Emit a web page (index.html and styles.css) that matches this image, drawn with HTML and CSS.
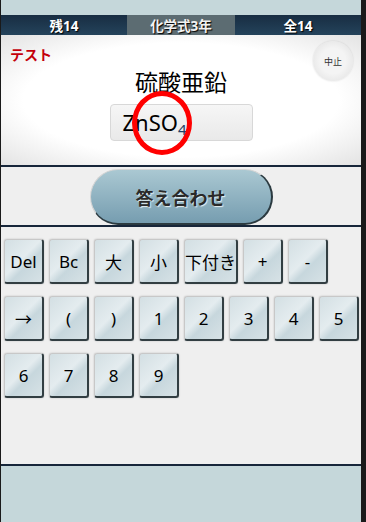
FILE: index.html
```html
<!DOCTYPE html>
<html lang="ja">
<head>
    <meta charset="UTF-8">
    <meta name="viewport" content="width=device-width, initial-scale=1.0">
    <title>化学式3年</title>
    <link rel="stylesheet" href="styles.css">
</head>
<body>

    <div class="app">
        <div class="top-space"></div>

        <div class="status-bar">
            <div class="status-cell">残14</div>
            <div class="status-cell current">化学式3年</div>
            <div class="status-cell">全14</div>
        </div>

        <div class="question-card">
            <div class="mode-label">テスト</div>
            <div class="stop-button">中止</div>
            <div class="question-title">硫酸亜鉛</div>
            <div class="answer-box">
                ZnSO<sub>4</sub>
                <span class="mark-circle"></span>
            </div>
        </div>

        <div class="divider"></div>

        <div class="check-area">
            <div class="check-button">答え合わせ</div>
        </div>

        <div class="divider"></div>

        <div class="keyboard">
            <div class="key-row">
                <div class="key">Del</div>
                <div class="key">Bc</div>
                <div class="key">大</div>
                <div class="key">小</div>
                <div class="key">下付き</div>
                <div class="key">+</div>
                <div class="key">-</div>
            </div>
            <div class="key-row">
                <div class="key">→</div>
                <div class="key">(</div>
                <div class="key">)</div>
                <div class="key">1</div>
                <div class="key">2</div>
                <div class="key">3</div>
                <div class="key">4</div>
                <div class="key">5</div>
            </div>
            <div class="key-row">
                <div class="key">6</div>
                <div class="key">7</div>
                <div class="key">8</div>
                <div class="key">9</div>
            </div>
        </div>

        <div class="divider"></div>

        <div class="bottom-space"></div>
    </div>

</body>
</html>
```

FILE: styles.css
```css
* {
    margin: 0;
    padding: 0;
    box-sizing: border-box;
}

body {
    background-color: #1a1a1a;
    font-family: "Noto Sans", "Noto Sans CJK JP", sans-serif;
    height: 522px;
    overflow: hidden;
}

.app {
    width: 360px;
    height: 522px;
    margin-left: 1px;
    display: flex;
    flex-direction: column;
}

.top-space {
    height: 15px;
    background: #c5d7da;
}

/* Top status bar */
.status-bar {
    height: 20px;
    display: flex;
    background: linear-gradient(#182d42, #24435b);
}

.status-cell {
    flex: 1;
    display: flex;
    justify-content: center;
    align-items: center;
    color: #fff;
    font-size: 13.5px;
    font-weight: bold;
    text-shadow: 1px 1px 1px #000;
}

.status-cell.current {
    flex: 0 0 108px;
    background: #5c6c72;
    color: #f2f2f2;
}

/* Question card */
.question-card {
    height: 130px;
    position: relative;
    background: radial-gradient(ellipse at center, #fff 62%, #e3e3e3 100%);
    display: flex;
    flex-direction: column;
    align-items: center;
}

.mode-label {
    position: absolute;
    left: 9px;
    top: 9px;
    color: #c4000b;
    font-size: 14px;
    font-weight: bold;
}

.stop-button {
    position: absolute;
    right: 8px;
    top: 6px;
    width: 40px;
    height: 40px;
    border-radius: 50%;
    background: radial-gradient(circle at center, #f4f4f4 45%, #dedede 100%);
    box-shadow: 0 0 2px rgba(0, 0, 0, 0.15);
    display: flex;
    justify-content: center;
    align-items: center;
    font-size: 9px;
    color: #333;
}

.question-title {
    margin-top: 32px;
    font-size: 23px;
    line-height: 31px;
    color: #000;
}

.answer-box {
    position: relative;
    margin-top: 6px;
    width: 143px;
    height: 37px;
    padding-left: 12px;
    border: 1px solid #d8d8d8;
    border-radius: 4px;
    background: linear-gradient(#f6f6f6, #e9e9e9);
    font-size: 22px;
    line-height: 34px;
    color: #000;
}

.answer-box sub {
    font-size: 15px;
    color: #1d3f66;
    vertical-align: -4px;
}

.mark-circle {
    position: absolute;
    left: 21px;
    top: -14px;
    width: 60px;
    height: 64px;
    border: 5px solid #f00;
    border-radius: 50%;
}

.divider {
    height: 2px;
    background: #17263a;
}

/* Answer check */
.check-area {
    height: 58px;
    background: #efefef;
    display: flex;
    justify-content: center;
    padding-top: 2px;
}

.check-button {
    width: 183px;
    height: 56px;
    border-radius: 28px;
    background: linear-gradient(#aac8d2, #769db0);
    border-top: 1px solid #d4d4d4;
    border-left: 1px solid #d4d4d4;
    border-right: 2px solid #2b3a40;
    border-bottom: 2px solid #2b3a40;
    display: flex;
    justify-content: center;
    align-items: center;
    font-size: 18px;
    font-weight: bold;
    color: #2a2a2a;
    text-shadow: 1px 1px 1px #e8f0f2;
}

/* Keyboard */
.keyboard {
    flex: 0 0 237px;
    background: #efefef;
    padding: 12px 0 0 3px;
    display: flex;
    flex-direction: column;
    gap: 12px;
}

.key-row {
    display: flex;
    gap: 5px;
}

.key {
    min-width: 40px;
    height: 45px;
    border-radius: 3px;
    background: linear-gradient(135deg, #d3dfe3 0%, #e4ecef 45%, #c7d7dd 60%, #d7e2e6 100%);
    border-top: 1px solid #c8c8c8;
    border-left: 1px solid #c8c8c8;
    border-right: 2px solid #323e42;
    border-bottom: 2px solid #323e42;
    box-shadow: 0 0 2px rgba(0, 0, 0, 0.2);
    display: flex;
    justify-content: center;
    align-items: center;
    font-size: 17px;
    color: #000;
    white-space: nowrap;
    overflow: hidden;
}

.bottom-space {
    flex: 1;
    background: #c5d7da;
}
```
